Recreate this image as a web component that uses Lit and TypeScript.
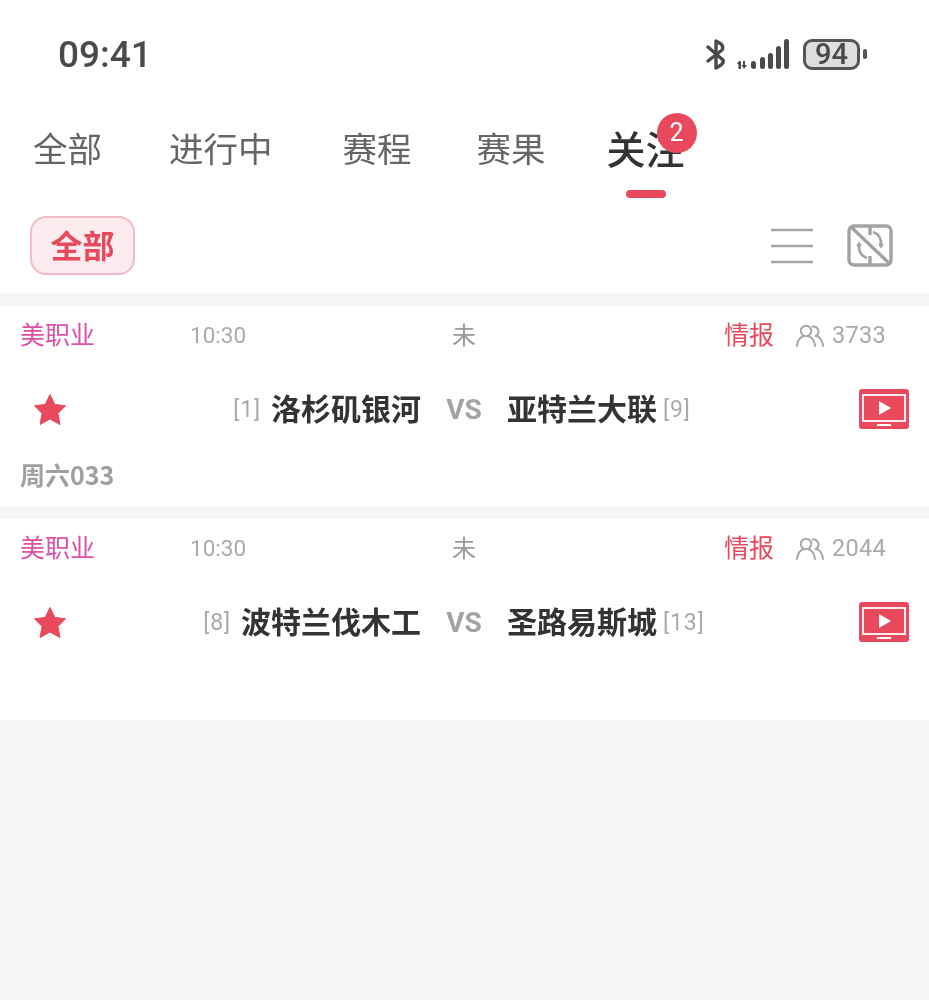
import { LitElement, html, css, svg, unsafeCSS } from 'lit';
import { customElement } from 'lit/decorators.js';

const RED = '#e8495d';
const red = unsafeCSS(RED);

const tabs = ['全部', '进行中', '赛程', '赛果', '关注'];

const matches = [
  { home: '洛杉矶银河', homeRank: '[1]', away: '亚特兰大联', awayRank: '[9]', count: '3733', note: '周六033' },
  { home: '波特兰伐木工', homeRank: '[8]', away: '圣路易斯城', awayRank: '[13]', count: '2044', note: '' },
];

const bluetooth = svg`<svg class="bt" width="20" height="31" viewBox="0 0 20 31" fill="none" stroke="#4a4a4a" stroke-width="3.4" stroke-linecap="round" stroke-linejoin="round">
  <path d="M2 8 L17 21 Q18 24 15 26 L10 29 L10 2 L15 5 Q18 8 16 11 L2 22" />
</svg>`;

const signal = svg`<svg width="54" height="32" viewBox="0 0 54 32" fill="#4a4a4a">
  <path d="M1 25 L3.5 23 H5 V31 H2.5 V26.5 Z" />
  <path d="M7 23 H9 V27 H11 L8 31 L5.5 27 H7 Z" />
  <rect x="15" y="23" width="5" height="8" rx="2.5" />
  <rect x="24" y="19" width="5" height="12" rx="2.5" />
  <rect x="32" y="15" width="5" height="16" rx="2.5" />
  <rect x="40" y="8" width="5" height="23" rx="2.5" />
  <rect x="48" y="1" width="5" height="30" rx="2.5" />
</svg>`;

const menuIcon = svg`<svg width="42" height="36" viewBox="0 0 42 36" stroke="#a6a6a6" stroke-width="2.6">
  <path d="M0 2 H42 M0 18 H42 M0 34 H42" />
</svg>`;

const syncIcon = svg`<svg width="46" height="43" viewBox="0 0 46 43" fill="none" stroke="#a3a3a3" stroke-width="3.4">
  <rect x="2" y="2" width="42" height="39" rx="5" />
  <path d="M4 3 L43 40" />
  <path d="M23 2 V11 M23 32 V41" />
  <path d="M26 8 Q35 11 34 22" stroke-width="2.6" />
  <path d="M20 34 Q11 31 12 20" stroke-width="2.6" />
  <path d="M32 20 L34 23 L36 20 M10 22 L12 19 L14 22" stroke-width="1.8" />
</svg>`;

const usersIcon = svg`<svg width="28" height="23" viewBox="0 0 28 23" fill="none" stroke="#a8a8a8" stroke-width="2" stroke-linecap="round">
  <circle cx="10" cy="7" r="5.2" />
  <path d="M1 22 Q2 14 7 12.5 M13 12.5 Q18 14 19 22" />
  <path d="M16.5 2.6 A5 5 0 0 1 20 11.8 Q26 13.5 27 22" />
</svg>`;

const starIcon = svg`<svg width="32" height="31" viewBox="0 0 32 31"><path fill="${RED}" stroke="${RED}" stroke-width="1" stroke-linejoin="round" d="M16 0.5 L20.8 10.4 L31.5 11.8 L24 19.4 L25.9 30.5 L16 25 L6.1 30.5 L8 19.4 L0.5 11.8 L11.2 10.4 Z" /></svg>`;

const tvIcon = svg`<svg width="50" height="40" viewBox="0 0 50 40">
  <rect width="50" height="40" rx="3" fill="${RED}" />
  <rect x="4" y="6" width="42" height="26" fill="none" stroke="#fff" stroke-width="1.8" />
  <path d="M20 12 L32 19 L20 26 Z" fill="#fff" />
  <rect x="18" y="35" width="14" height="2" fill="#fff" />
</svg>`;

@customElement('app-root')
export class AppRoot extends LitElement {
  static styles = css`
    :host {
      display: block;
      width: 929px;
      height: 1000px;
      background: #f5f6f8;
      font-family: "Noto Sans CJK SC", "Noto Sans", sans-serif;
      overflow: hidden;
      filter: blur(0.35px);
    }
    .top {
      background: #fff;
      height: 293px;
      display: flex;
      flex-direction: column;
    }
    .status {
      height: 108px;
      flex: none;
      display: flex;
      align-items: center;
      padding: 0 62px 0 58px;
      color: #4a4a4a;
    }
    .clock {
      font-family: Roboto, sans-serif;
      font-size: 37px;
      font-weight: 500;
      line-height: 1;
    }
    .sys {
      margin-left: auto;
      display: flex;
      align-items: center;
      gap: 10px;
    }
    .battery {
      display: flex;
      align-items: center;
      gap: 3px;
      margin-left: 3px;
    }
    .cell {
      width: 57px;
      height: 31px;
      box-sizing: border-box;
      border: 3px solid #555;
      border-radius: 9px;
      background: #dedede;
      font-family: Roboto, sans-serif;
      font-size: 29px;
      font-weight: 500;
      line-height: 25px;
      text-align: center;
    }
    .cap {
      width: 4px;
      height: 10px;
      border-radius: 2px;
      background: #555;
    }
    .tabs {
      height: 92px;
      flex: none;
      display: flex;
      gap: 67px;
      padding-left: 33px;
      color: #666;
      font-size: 34.5px;
    }
    .tab {
      position: relative;
      line-height: 78px;
      height: 92px;
      white-space: nowrap;
    }
    .tab:nth-child(3) { margin-left: 3px; }
    .tab:nth-child(4) { margin-left: -2px; }
    .tab:nth-child(5) { margin-left: -6px; }
    .tab.active {
      color: #333;
      font-size: 39px;
      font-weight: 500;
    }
    .tab.active::after {
      content: "";
      position: absolute;
      left: 19px;
      bottom: 2px;
      width: 40px;
      height: 8px;
      border-radius: 4px;
      background: ${red};
    }
    .badge {
      position: absolute;
      left: 50px;
      top: 5px;
      width: 40px;
      height: 40px;
      border-radius: 50%;
      background: ${red};
      color: #fff;
      font-family: Roboto, sans-serif;
      font-size: 25px;
      font-weight: 400;
      line-height: 40px;
      text-align: center;
    }
    .filter {
      flex: 1;
      display: flex;
      align-items: flex-start;
      padding: 16px 36px 0 30px;
    }
    .chip {
      width: 105px;
      height: 59px;
      box-sizing: border-box;
      border: 2px solid #f1bcc5;
      border-radius: 16px;
      background: #fdecef;
      color: ${red};
      font-size: 32px;
      font-weight: 700;
      line-height: 52px;
      text-align: center;
    }
    .tools {
      margin-left: auto;
      display: flex;
      align-items: center;
      gap: 34px;
      height: 59px;
    }
    .card {
      background: #fff;
      margin-top: 13px;
      height: 200px;
      padding-left: 20px;
      box-sizing: border-box;
    }
    .card:last-child { height: 201px; }
    .meta {
      height: 58px;
      display: grid;
      grid-template-columns: 170px 242px 64px 1fr;
      align-items: center;
      font-size: 25px;
    }
    .league { color: #de4fa6; margin-bottom: 4px; }
    .time {
      color: #aaa;
      font-family: Roboto, sans-serif;
      font-size: 22.5px;
    }
    .state { color: #999; text-align: center; font-size: 24px; margin-bottom: 4px; }
    .side {
      display: flex;
      align-items: center;
      margin-left: 228px;
      white-space: nowrap;
    }
    .intel { color: ${red}; width: 72px; margin-bottom: 4px; }
    .side svg { flex: none; }
    .count {
      color: #aaa;
      font-family: Roboto, sans-serif;
      font-size: 23.5px;
      letter-spacing: 0.3px;
      margin-left: 8px;
    }
    .teams {
      height: 90px;
      display: grid;
      grid-template-columns: 401px 86px 1fr;
      align-items: center;
    }
    .home {
      display: flex;
      align-items: center;
      padding-left: 14px;
    }
    .home .rank { margin-left: auto; margin-right: 10px; }
    .away {
      display: flex;
      align-items: center;
      padding-right: 20px;
    }
    .away .rank { margin-left: 6px; }
    .away svg { margin-left: auto; flex: none; }
    .name {
      color: #333;
      font-size: 30px;
      font-weight: 700;
      white-space: nowrap;
      line-height: 40px;
      margin-top: -4px;
    }
    .rank {
      color: #aaa;
      font-family: Roboto, sans-serif;
      font-size: 23px;
      letter-spacing: 0.9px;
    }
    .vs {
      color: #a3a3a3;
      font-family: Roboto, sans-serif;
      font-size: 28px;
      font-weight: 700;
      text-align: center;
    }
    .note {
      color: #a0a0a0;
      font-size: 25px;
      font-weight: 700;
      line-height: 32px;
      margin-top: 4px;
    }
  `;

  render() {
    return html`
      <div class="top">
        <div class="status">
          <span class="clock">09:41</span>
          <div class="sys">
            ${bluetooth}
            ${signal}
            <div class="battery"><div class="cell">94</div><div class="cap"></div></div>
          </div>
        </div>
        <div class="tabs">
          ${tabs.map((t, i) => html`
            <div class="tab ${i === 4 ? 'active' : ''}">${t}${i === 4 ? html`<span class="badge">2</span>` : ''}</div>
          `)}
        </div>
        <div class="filter">
          <div class="chip">全部</div>
          <div class="tools">${menuIcon}${syncIcon}</div>
        </div>
      </div>
      ${matches.map((m) => html`
        <div class="card">
          <div class="meta">
            <span class="league">美职业</span>
            <span class="time">10:30</span>
            <span class="state">未</span>
            <div class="side">
              <span class="intel">情报</span>
              ${usersIcon}
              <span class="count">${m.count}</span>
            </div>
          </div>
          <div class="teams">
            <div class="home">
              ${starIcon}
              <span class="rank">${m.homeRank}</span>
              <span class="name">${m.home}</span>
            </div>
            <div class="vs">VS</div>
            <div class="away">
              <span class="name">${m.away}</span>
              <span class="rank">${m.awayRank}</span>
              ${tvIcon}
            </div>
          </div>
          ${m.note ? html`<div class="note">${m.note}</div>` : ''}
        </div>
      `)}
    `;
  }
}
